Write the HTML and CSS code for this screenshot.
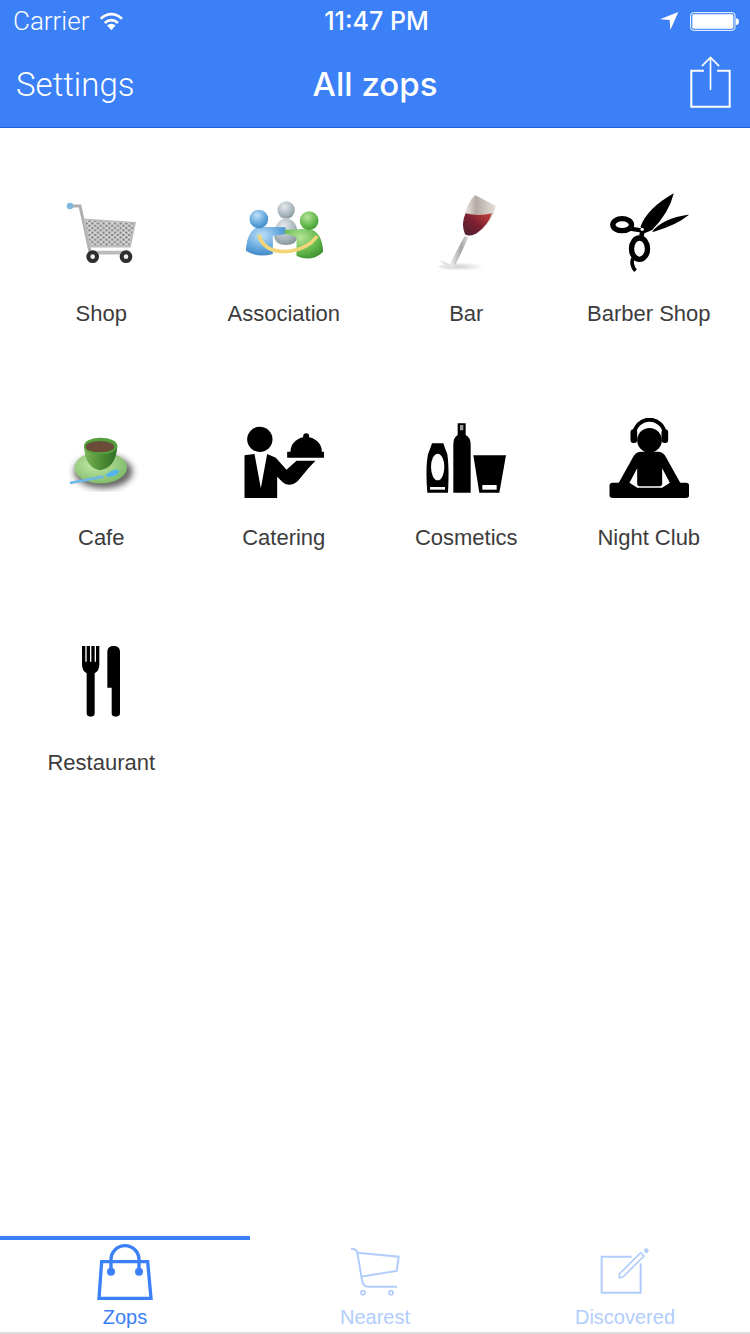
FILE: index.html
```html
<!DOCTYPE html>
<html lang="en">
<head>
<meta charset="utf-8">
<title>All zops</title>
<link rel="stylesheet" href="styles.css">
</head>
<body>
<div class="app">
  <header class="header">
    <div class="status">
      <div class="status-left">
        <span class="carrier">Carrier</span>
        <svg class="wifi" viewBox="300 30 75 60"><path d="M337 88 L324 73 Q337 63 350 73 Z" fill="#fff"/><path d="M317 66 Q337 49 357 66" fill="none" stroke="#fff" stroke-width="8"/><path d="M305 53 Q337 26 369 53" fill="none" stroke="#fff" stroke-width="8"/></svg>
      </div>
      <span class="time">11:47 PM</span>
      <div class="status-right">
        <svg class="loc" viewBox="852 33 60 60"><path d="M855 58 L910 36 L886 90 L884 60 Z" fill="#fff"/></svg>
        <svg class="battery" viewBox="945 33 150 57"><rect x="947" y="35" width="133" height="53" rx="8" fill="none" stroke="#fff" stroke-width="3"/><rect x="952" y="40" width="123" height="43" rx="4" fill="#fff"/><path d="M1083 52 Q1092 53 1092 62 Q1092 71 1083 72 Z" fill="#fff"/></svg>
      </div>
    </div>
    <div class="nav">
      <span class="nav-left">Settings</span>
      <h1 class="nav-title">All zops</h1>
      <div class="nav-right">
        <svg class="share" viewBox="940 165 130 162"><path d="M985 212 H947 V321 H1063 V212 H1025" fill="none" stroke="#fff" stroke-width="6"/><path d="M1005 270 V174 M979 198 L1005 172 L1031 198" fill="none" stroke="#fff" stroke-width="5"/></svg>
      </div>
    </div>
  </header>

  <main class="grid">
    <div class="cell">
      <svg class="icon" viewBox="63 39 240 240">
        <defs>
          <pattern id="mesh" width="17" height="14" patternUnits="userSpaceOnUse"><rect width="17" height="14" fill="#d4d4d4"/><circle cx="4" cy="4" r="3.6" fill="#7d7d7d"/><circle cx="12.5" cy="11" r="3.6" fill="#7d7d7d"/></pattern>
          <radialGradient id="hb" cx=".4" cy=".3" r=".8"><stop offset="0" stop-color="#bfe0f7"/><stop offset=".6" stop-color="#5fa5dc"/><stop offset="1" stop-color="#3b7dbd"/></radialGradient>
          <radialGradient id="hg" cx=".4" cy=".3" r=".8"><stop offset="0" stop-color="#e4e9ec"/><stop offset=".6" stop-color="#a9b6bd"/><stop offset="1" stop-color="#7f8d95"/></radialGradient>
          <radialGradient id="hn" cx=".4" cy=".3" r=".8"><stop offset="0" stop-color="#b6e59a"/><stop offset=".6" stop-color="#62b84b"/><stop offset="1" stop-color="#3a8a2e"/></radialGradient>
          <linearGradient id="wine" x1="1" y1="0" x2="0" y2="1"><stop offset="0" stop-color="#c8443f"/><stop offset=".5" stop-color="#7c2030"/><stop offset="1" stop-color="#4b2030"/></linearGradient>
          <linearGradient id="glass" x1="0" y1="0" x2="1" y2="0"><stop offset="0" stop-color="#f6f6f4"/><stop offset=".4" stop-color="#b5aaa5"/><stop offset="1" stop-color="#e6e2dd"/></linearGradient>
          <linearGradient id="stem" x1="0" y1="0" x2="1" y2="0"><stop offset="0" stop-color="#f2f2f2"/><stop offset=".6" stop-color="#a3a3a3"/><stop offset="1" stop-color="#e4e4e4"/></linearGradient>
          <radialGradient id="foot" cx=".4" cy=".5" r=".6"><stop offset="0" stop-color="#cfcfcf"/><stop offset="1" stop-color="#fff"/></radialGradient>
          <linearGradient id="cup" x1="0" y1="0" x2="1" y2="0"><stop offset="0" stop-color="#7db55a"/><stop offset=".5" stop-color="#4f8f35"/><stop offset="1" stop-color="#2f6d24"/></linearGradient>
          <radialGradient id="plate" cx=".4" cy=".4" r=".7"><stop offset="0" stop-color="#c3eaa9"/><stop offset="1" stop-color="#7ab763"/></radialGradient>
          <filter id="blur"><feGaussianBlur stdDeviation="10"/></filter>
        </defs>
        <path d="M92 78 H120 L150 215" fill="none" stroke="#b0b0b0" stroke-width="9"/>
        <circle cx="90" cy="78" r="10" fill="#7db9dc"/>
        <path d="M132 118 L285 128 L270 200 H150 Z" fill="url(#mesh)" stroke="#bdbdbd" stroke-width="5"/>
        <path d="M145 218 H270" stroke="#bbb" stroke-width="11"/>
        <circle cx="158" cy="230" r="13" fill="#eee" stroke="#2e2e2e" stroke-width="12"/>
        <circle cx="258" cy="230" r="13" fill="#eee" stroke="#2e2e2e" stroke-width="12"/>
      </svg>
      <span class="label">Shop</span>
    </div>
    <div class="cell">
      <svg class="icon" viewBox="610.5 39 240 240">
        <circle cx="737" cy="90" r="26" fill="url(#hg)"/>
        <path d="M701 170 Q700 122 737 114 Q774 122 771 170 Q768 195 737 195 Q704 195 701 170 Z" fill="url(#hg)"/>
        <path d="M616 212 Q620 150 655 140 L735 142 V162 L697 168 V222 Q650 235 616 212 Z" fill="url(#hb)"/>
        <circle cx="655" cy="117" r="28" fill="url(#hb)"/>
        <path d="M848 215 Q845 155 806 146 L732 150 V160 L768 172 V228 Q815 248 848 215 Z" fill="url(#hn)"/>
        <circle cx="806" cy="122" r="28" fill="url(#hn)"/>
        <path d="M655 165 Q668 215 735 215 Q800 210 830 168" fill="none" stroke="#f3d67a" stroke-width="11"/>
      </svg>
      <span class="label">Association</span>
    </div>
    <div class="cell">
      <svg class="icon" viewBox="18 39 240 240">
        <ellipse cx="125" cy="260" rx="70" ry="11" fill="url(#foot)"/>
        <path d="M55 238 L112 262 L85 264 Z" fill="#e3e3e3"/>
        <path d="M134 168 L146 172 L106 255 L90 250 Z" fill="url(#stem)"/>
        <path d="M165 45 L228 78 Q215 130 170 160 Q150 172 135 163 Q122 130 135 95 Q148 62 165 45 Z" fill="url(#glass)"/>
        <path d="M137 100 Q175 110 216 100 Q205 135 170 160 Q150 172 135 163 Q122 130 137 100 Z" fill="url(#wine)"/>
      </svg>
      <span class="label">Bar</span>
    </div>
    <div class="cell">
      <svg class="icon" viewBox="565.5 39 240 240">
        <path d="M660 140 Q680 85 760 40 Q745 100 695 150 L672 160 Z M695 155 Q725 115 807 103 Q770 135 700 155 Z" fill="#000"/>
        <ellipse cx="605" cy="134" rx="28" ry="18" fill="none" stroke="#000" stroke-width="16"/>
        <path d="M628 146 L668 152" stroke="#000" stroke-width="13"/>
        <ellipse cx="657" cy="206" rx="24" ry="32" fill="none" stroke="#000" stroke-width="16"/>
        <path d="M666 150 L662 175" stroke="#000" stroke-width="14"/>
        <path d="M637 235 Q630 255 645 272" fill="none" stroke="#000" stroke-width="11"/>
        <circle cx="665" cy="148" r="5" fill="#fff"/>
      </svg>
      <span class="label">Barber Shop</span>
    </div>
    <div class="cell">
      <svg class="icon" viewBox="63 21 240 240">
        <ellipse cx="190" cy="182" rx="88" ry="50" fill="#333" fill-opacity=".75" filter="url(#blur)"/>
        <ellipse cx="182" cy="170" rx="79" ry="47" fill="url(#plate)"/>
        <path d="M132 105 Q135 170 180 178 Q228 170 232 105 Z" fill="url(#cup)"/>
        <ellipse cx="182" cy="105" rx="50" ry="25" fill="#55a03d"/>
        <ellipse cx="180" cy="107" rx="43" ry="17" fill="#6a4c38"/>
        <path d="M90 216 L190 197" stroke="#6db8e6" stroke-width="8"/>
        <path d="M195 193 Q225 168 238 178 Q235 197 205 198 Z" fill="#54b6ea"/>
      </svg>
      <span class="label">Cafe</span>
    </div>
    <div class="cell">
      <svg class="icon" viewBox="610.5 21 240 240">
        <circle cx="658" cy="85" r="38" fill="#000"/>
        <path d="M612 133 L642 129 L661 232 L680 129 L706 140 L738 176 L768 149 H825 L805 170 L772 210 Q745 232 725 212 L710 197 V261 H612 Z" fill="#000"/>
        <circle cx="797" cy="76" r="9" fill="#000"/>
        <path d="M750 122 A47 44 0 0 1 844 122 H852 V140 H740 V122 Z" fill="#000"/>
      </svg>
      <span class="label">Catering</span>
    </div>
    <div class="cell">
      <svg class="icon" viewBox="48 21 240 240">
        <path d="M66 97 H100 Q104 110 112 130 Q118 170 114 245 H52 Q46 170 54 130 Q62 110 66 97 Z" fill="#000"/>
        <ellipse cx="83" cy="168" rx="20" ry="40" fill="#fff"/>
        <rect x="60" y="228" width="45" height="8" fill="#fff"/>
        <path d="M143 37 H167 V72 Q182 80 182 100 V245 H130 V100 Q130 80 143 72 Z" fill="#000"/>
        <rect x="150" y="42" width="10" height="16" fill="#999"/>
        <path d="M190 133 H288 L268 245 H208 Z" fill="#000"/>
        <rect x="217" y="222" width="43" height="14" fill="#fff"/>
      </svg>
      <span class="label">Cosmetics</span>
    </div>
    <div class="cell">
      <svg class="icon" viewBox="595.5 21 240 240">
        <circle cx="717" cy="88" r="37" fill="#000"/>
        <path d="M671 72 A46 46 0 0 1 763 72" fill="none" stroke="#000" stroke-width="12"/>
        <rect x="660" y="55" width="20" height="41" rx="9" fill="#000"/>
        <rect x="753" y="55" width="20" height="41" rx="9" fill="#000"/>
        <path d="M692 122 H742 Q756 122 764 134 L810 217 H624 L670 134 Q678 122 692 122 Z" fill="#000"/>
        <rect x="597" y="215" width="239" height="46" rx="9" fill="#000"/>
        <path d="M680 172 L657 215 L680 230 H755 L778 215 L755 172 Z M680 172 V218 Q680 226 692 226 H743 Q755 226 755 218 V172 Z" fill="#fff" fill-rule="evenodd"/>
      </svg>
      <span class="label">Night Club</span>
    </div>
    <div class="cell">
      <svg class="icon" viewBox="3 21 240 240">
        <path d="M66 33 H76 V80 H80 V33 H90 V80 H94 V33 H104 V80 H108 V33 H118 V88 Q118 108 104 115 V235 Q104 245 92 245 Q80 245 80 235 V115 Q66 108 66 88 Z" fill="#000"/>
        <path d="M142 50 Q142 33 161 33 Q180 33 180 50 V235 Q180 245 167 245 Q155 245 155 235 V158 H142 Z" fill="#000"/>
      </svg>
      <span class="label">Restaurant</span>
    </div>
  </main>

  <nav class="tabbar">
    <div class="tab tab-active">
      <svg class="tab-icon" viewBox="285 36 180 180"><path d="M305 95 H443 L453 205 H297 Z" fill="none" stroke="currentColor" stroke-width="10"/><path d="M333 125 V89 A42 42 0 0 1 417 89 V125" fill="none" stroke="currentColor" stroke-width="10"/><circle cx="333" cy="125" r="12" fill="currentColor"/><circle cx="417" cy="125" r="12" fill="currentColor"/></svg>
      <span class="tab-label">Zops</span>
    </div>
    <div class="tab">
      <svg class="tab-icon" viewBox="135 36 180 180"><path d="M153 56 Q170 56 172 68 L186 150 Q189 170 205 170 H291 M172 68 L296 80 L290 123 L181 140" fill="none" stroke="currentColor" stroke-width="6"/><circle cx="189" cy="188" r="6" fill="none" stroke="currentColor" stroke-width="5"/><circle cx="273" cy="188" r="6" fill="none" stroke="currentColor" stroke-width="5"/></svg>
      <span class="tab-label">Nearest</span>
    </div>
    <div class="tab">
      <svg class="tab-icon" viewBox="885 36 180 180"><path d="M995 80 H905 V188 H1022 V100" fill="none" stroke="currentColor" stroke-width="6"/><path d="M958 132 L1022 68 L1032 78 L969 141 L958 143 Z" fill="none" stroke="currentColor" stroke-width="5"/><circle cx="1039" cy="62" r="7" fill="currentColor"/></svg>
      <span class="tab-label">Discovered</span>
    </div>
  </nav>
</div>
</body>
</html>
```

FILE: styles.css
```css
* { box-sizing: border-box; }
html, body { margin: 0; padding: 0; background: #fff; }
.app {
  width: 750px;
  height: 1334px;
  display: flex;
  flex-direction: column;
  overflow: hidden;
  font-family: "Liberation Sans", Arial, sans-serif;
  color: #333;
}
.header {
  height: 128px;
  background: #3b80f6;
  border-bottom: 1px solid #1f5fd0;
  color: #fff;
  flex: none;
}
.status {
  height: 40px;
  display: grid;
  grid-template-columns: 1fr auto 1fr;
  align-items: center;
  padding: 1px 10px 0 13px;
}
.status-left { display: flex; align-items: center; gap: 10px; }
.carrier { font-family: Roboto, sans-serif; font-weight: 300; font-size: 26px; line-height: 40px; }
.wifi { width: 25px; height: 20px; display: block; }
.time { font-family: Inter, sans-serif; font-weight: 500; font-size: 25px; line-height: 40px; }
.status-right { display: flex; justify-content: flex-end; align-items: center; gap: 11px; }
.loc { width: 20px; height: 20px; display: block; }
.battery { width: 50px; height: 19px; display: block; }
.nav {
  height: 87px;
  display: grid;
  grid-template-columns: 1fr auto 1fr;
  align-items: center;
  padding: 1px 16px 0;
}
.nav-left { font-family: Roboto, sans-serif; font-weight: 300; font-size: 33px; }
.nav-title { margin: 0; font-family: Inter, sans-serif; font-weight: 500; font-size: 33px; line-height: 40px; }
.nav-right { display: flex; justify-content: flex-end; }
.share { width: 43px; height: 54px; display: block; margin: -4px 2px 0 0; }
.grid {
  flex: 1;
  display: grid;
  grid-template-columns: repeat(4, 182.5px);
  grid-auto-rows: 224.5px;
  align-content: start;
  padding: 65px 0 0 10px;
}
.cell { display: flex; flex-direction: column; align-items: center; }
.icon { width: 80px; height: 80px; display: block; flex: none; }
.label { margin-top: 27.7px; font-size: 22px; line-height: 26px; color: #3c3c3c; }
.tabbar {
  height: 98px;
  flex: none;
  display: grid;
  grid-template-columns: repeat(3, 1fr);
  border-bottom: 2px solid #ddd;
  background: #fff;
}
.tab {
  display: flex;
  flex-direction: column;
  align-items: center;
  padding-top: 2px;
  border-top: 4px solid transparent;
  color: #b1cdfc;
}
.tab-active { border-top-color: #3b80f6; color: #3b80f6; }
.tab-icon { width: 60px; height: 60px; display: block; flex: none; }
.tab-label { font-size: 20px; line-height: 24px; margin-top: 3px; }
```
